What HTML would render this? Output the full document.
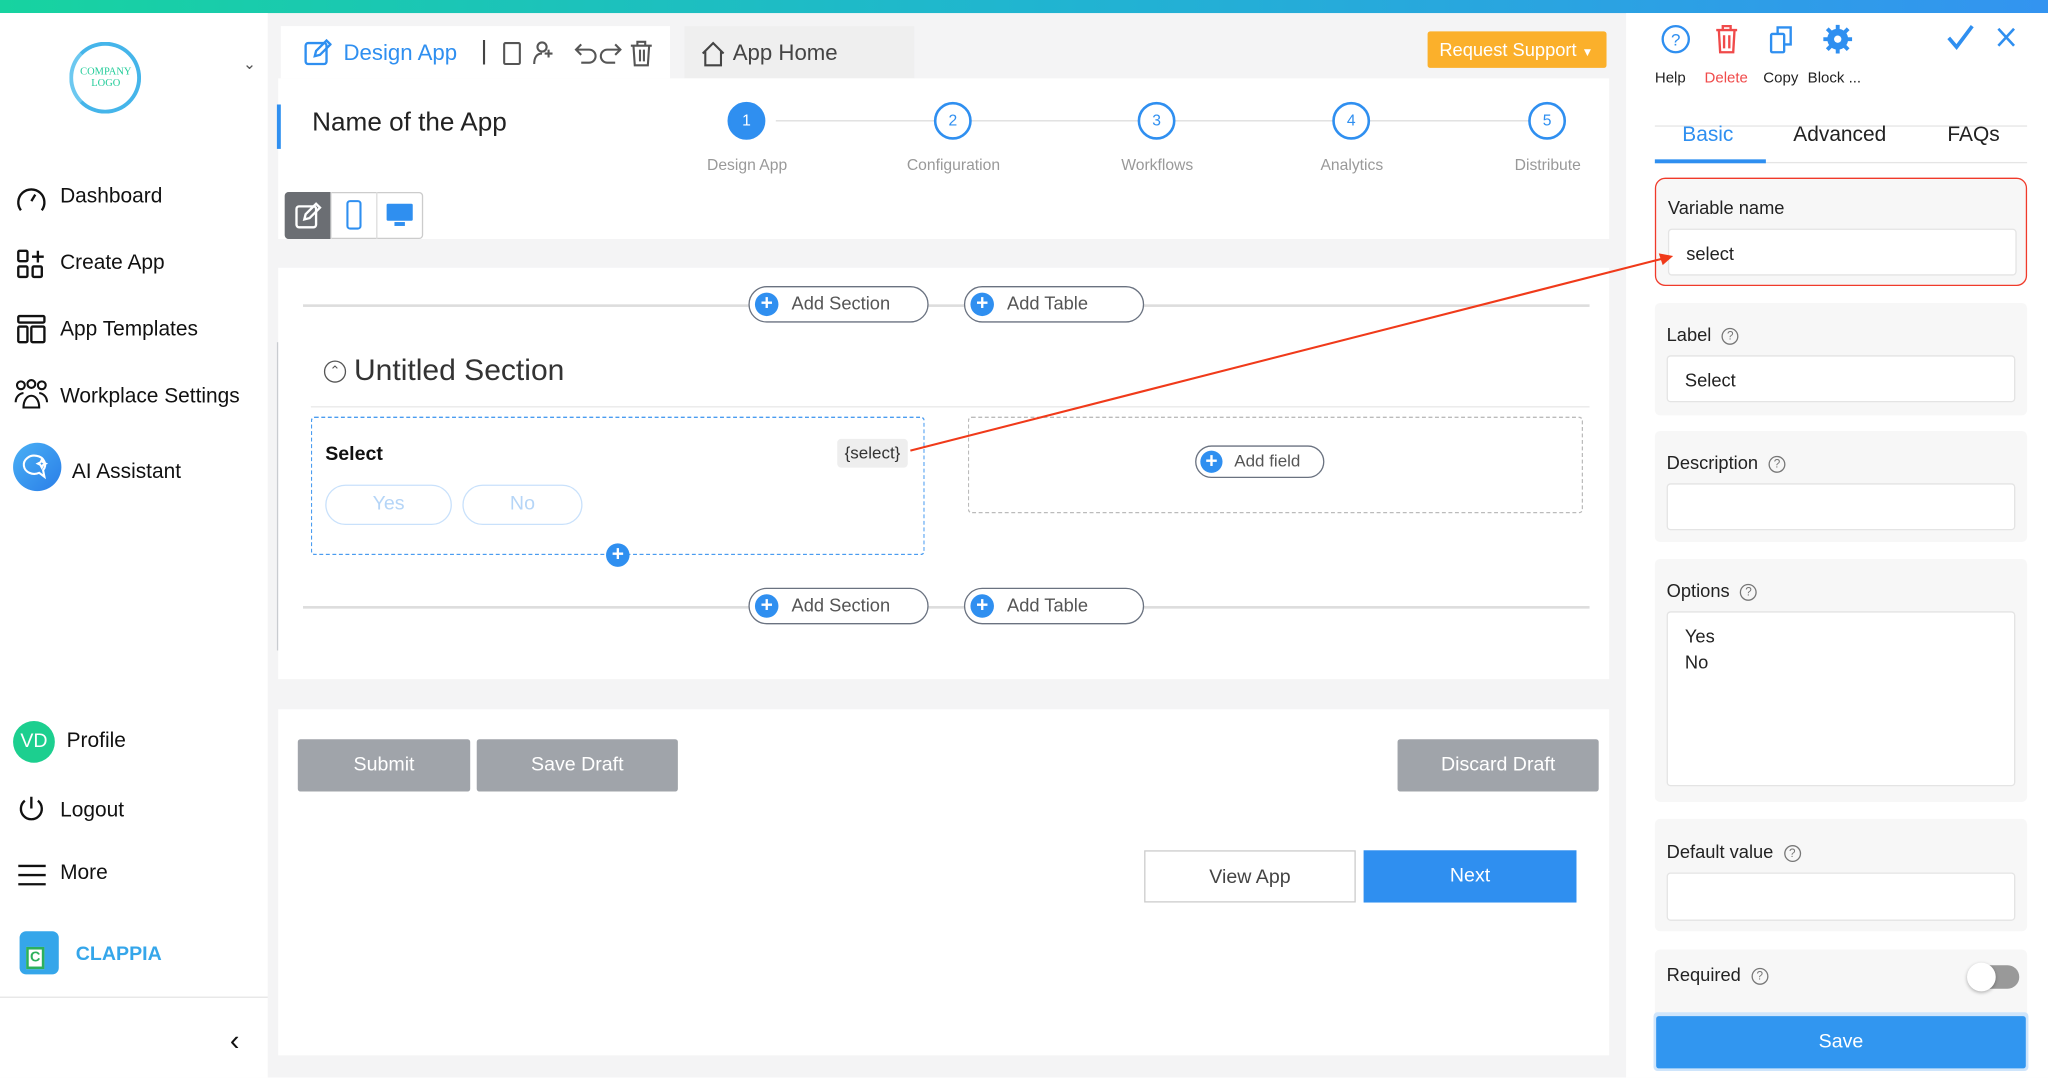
<!DOCTYPE html>
<html><head><meta charset="utf-8"><style>
*{box-sizing:border-box;margin:0;padding:0}
html,body{width:2048px;height:1077px;overflow:hidden;background:#fff;font-family:"Liberation Sans",Arial,sans-serif;color:#222}
#w{position:absolute;left:0;top:0;width:1568px;height:825px;transform:scale(1.30612);transform-origin:0 0;background:#f4f4f5}
.a{position:absolute}
.t{position:absolute;white-space:nowrap}
.nav{font-size:16px;color:#111}
.step{width:29px;height:29px;border-radius:50%;border:2px solid #2f8ff0;color:#2f8ff0;font-size:12px;text-align:center;line-height:25px;background:#fff}
.sl{font-size:12px;color:#999;text-align:center;width:120px}
.pill{border:1.5px solid #6a7280;border-radius:15px;height:28px;background:#fff;font-size:14px;color:#555;line-height:25px}
.plus{position:absolute;left:4px;top:4px;width:18px;height:18px;border-radius:50%;background:#2f8ff0;color:#fff;font-weight:bold;text-align:center;line-height:18px;font-size:16px}
.sec{position:absolute;left:1267px;width:285px;background:#f7f7f7;border-radius:4px}
.lab{position:absolute;left:9px;font-size:14px;color:#222}
.inp{position:absolute;left:9px;width:267px;background:#fff;border:1px solid #e4e4e4;border-radius:3px;font-size:14px;padding-left:13px}
.q{display:inline-block;width:13px;height:13px;border:1.2px solid #777;border-radius:50%;font-size:9px;text-align:center;line-height:11px;color:#777;margin-left:8px;vertical-align:middle}
.gb{position:absolute;background:#a0a4aa;color:#fff;font-size:15px;text-align:center;line-height:40px;border-radius:2px}
</style></head><body><div id="w">
<div class="a" style="left:0;top:0;width:1568px;height:10px;background:linear-gradient(90deg,#17d3a0,#20b5d0 50%,#3394f0)"></div>
<!-- sidebar -->
<div class="a" style="left:0;top:10px;width:205px;height:815px;background:#fff"></div>
<div class="a" style="left:53px;top:32px;width:55px;height:55px;border-radius:50%;border:3px solid #45b5ea;border-left-color:#6cc8f0"></div>
<div class="t" style="left:56px;top:50px;width:50px;text-align:center;font-family:'Liberation Serif';font-size:8px;color:#2c9;line-height:9px">COMPANY<br>LOGO</div>
<div class="t" style="left:186px;top:42px;font-size:12px;color:#555">&#8964;</div>
<svg class="a" style="left:11px;top:140px" width="26" height="24" viewBox="0 0 26 24" fill="none" stroke="#111" stroke-width="1.8"><path d="M5 21A10 10 0 1 1 21 21"/><path d="M13 14l3-5"/></svg>
<div class="t nav" style="left:46px;top:142px">Dashboard</div>
<svg class="a" style="left:12px;top:190px" width="24" height="24" fill="none" stroke="#111" stroke-width="1.8"><rect x="2" y="2" width="7" height="8" rx="1"/><path d="M17 2v9M12.5 6.5h9"/><rect x="2" y="14" width="7" height="8" rx="1"/><rect x="13" y="14" width="7" height="8" rx="1"/></svg>
<div class="t nav" style="left:46px;top:193px">Create App</div>
<svg class="a" style="left:12px;top:240px" width="24" height="24" fill="none" stroke="#111" stroke-width="1.8"><rect x="2" y="2" width="20" height="5" rx="1"/><rect x="2" y="10" width="7" height="12" rx="1"/><rect x="12" y="10" width="10" height="12" rx="1"/></svg>
<div class="t nav" style="left:46px;top:244px">App Templates</div>
<svg class="a" style="left:10px;top:290px" width="28" height="24" fill="none" stroke="#111" stroke-width="1.6"><circle cx="6" cy="5" r="3"/><circle cx="14" cy="4" r="3"/><circle cx="22" cy="5" r="3"/><path d="M2 18c0-5 4-7 6-7M26 18c0-5-4-7-6-7M8 22c0-6 3-9 6-9s6 3 6 9z"/></svg>
<div class="t nav" style="left:46px;top:295px">Workplace Settings</div>
<div class="a" style="left:10px;top:339px;width:37px;height:37px;border-radius:50%;background:linear-gradient(135deg,#4ab0f5,#2a7ee8)"></div>
<svg class="a" style="left:16px;top:346px" width="24" height="22" fill="none" stroke="#fff" stroke-width="1.6"><path d="M12 3a8 7 0 1 0 2 13l4 3-1-5a8 7 0 0 0-5-11z"/><path d="M16 6l1 2 2 1-2 1-1 2-1-2-2-1 2-1z"/></svg>
<div class="t nav" style="left:55px;top:353px">AI Assistant</div>
<div class="a" style="left:10px;top:552px;width:32px;height:32px;border-radius:50%;background:#1ccf8f;color:#fff;font-size:15px;text-align:center;line-height:32px">VD</div>
<div class="t nav" style="left:51px;top:559px">Profile</div>
<svg class="a" style="left:12px;top:608px" width="24" height="24" fill="none" stroke="#111" stroke-width="1.8"><path d="M12 2v9"/><path d="M7 5a8 8 0 1 0 10 0"/></svg>
<div class="t nav" style="left:46px;top:612px">Logout</div>
<svg class="a" style="left:13px;top:661px" width="23" height="18" stroke="#111" stroke-width="1.8"><path d="M1 2h21M1 9h21M1 16h21"/></svg>
<div class="t nav" style="left:46px;top:660px">More</div>
<div class="a" style="left:15px;top:713px;width:30px;height:33px;border-radius:5px;background:#35a6ea"></div>
<div class="a" style="left:20px;top:725px;width:14px;height:17px;background:#fff;border:2px solid #2cb05c;color:#2cb05c;font-size:11px;font-weight:bold;text-align:center;line-height:13px">C</div>
<div class="t" style="left:58px;top:722px;font-size:15px;font-weight:bold;color:#35a6ea">CLAPPIA</div>
<div class="a" style="left:0;top:763px;width:205px;height:1px;background:#e5e5e5"></div>
<div class="t" style="left:176px;top:784px;font-size:22px;color:#111">&#8249;</div>
<div class="a" style="left:212px;top:262px;width:2px;height:236px;background:#c9ccd0"></div>
<!-- header -->
<div class="a" style="left:215px;top:20px;width:298px;height:40px;background:#fff"></div>
<svg class="a" style="left:232px;top:29px" width="22" height="22" fill="none" stroke="#2f8ff0" stroke-width="1.8"><rect x="2" y="4" width="16" height="16" rx="2"/><path d="M9 14l1-4 8-8 3 3-8 8z"/></svg>
<div class="t" style="left:263px;top:31px;font-size:17px;color:#2f8ff0">Design App</div>
<div class="t" style="left:368px;top:28px;font-size:20px;color:#444">|</div>
<svg class="a" style="left:382px;top:30px" width="120" height="22" fill="none" stroke="#555" stroke-width="1.6"><rect x="4" y="3" width="12" height="16" rx="1"/><circle cx="33" cy="6" r="3.5"/><path d="M27 19c0-5 2-8 6-8M38 8v6M35 11h6"/><path d="M60 8h9a5 5 0 0 1 0 10h-6M63 4l-4 4 4 4"/><path d="M92 8h-9a5 5 0 0 0 0 10h6M89 4l4 4-4 4"/><path d="M101 5h16M106 5V2h6v3M103 5l1 15h10l1-15M108 8v9M111 8v9"/></svg>
<div class="a" style="left:524px;top:20px;width:176px;height:40px;background:#efefef"></div>
<svg class="a" style="left:535px;top:30px" width="22" height="22" fill="none" stroke="#444" stroke-width="1.6"><path d="M3 11L11 3l8 8M5 9v11h12V9"/></svg>
<div class="t" style="left:561px;top:31px;font-size:17px;color:#444">App Home</div>
<div class="a" style="left:1093px;top:24px;width:137px;height:28px;background:#fbb02b;border-radius:2px;color:#fff;font-size:14px;line-height:28px;padding-left:9px">Request Support <span style="font-size:9px">&#9660;</span></div>
<!-- name panel -->
<div class="a" style="left:213px;top:60px;width:1019px;height:123px;background:#fff"></div>
<div class="a" style="left:212px;top:80px;width:3px;height:34px;background:#2f8ff0"></div>
<div class="t" style="left:239px;top:83px;font-size:20px;color:#222">Name of the App</div>
<div class="a" style="left:594px;top:92px;width:600px;height:1px;background:#ddd"></div>
<div class="a step" style="left:557px;top:78px;background:#2f8ff0;color:#fff">1</div>
<div class="a step" style="left:715px;top:78px">2</div>
<div class="a step" style="left:871px;top:78px">3</div>
<div class="a step" style="left:1020px;top:78px">4</div>
<div class="a step" style="left:1170px;top:78px">5</div>
<div class="t sl" style="left:512px;top:119px">Design App</div>
<div class="t sl" style="left:670px;top:119px">Configuration</div>
<div class="t sl" style="left:826px;top:119px">Workflows</div>
<div class="t sl" style="left:975px;top:119px">Analytics</div>
<div class="t sl" style="left:1125px;top:119px">Distribute</div>
<div class="a" style="left:218px;top:147px;width:106px;height:36px;border:1px solid #ccc;border-radius:3px;background:#fff"></div>
<div class="a" style="left:218px;top:147px;width:35px;height:36px;background:#6b6e73;border-radius:3px 0 0 3px"></div>
<svg class="a" style="left:225px;top:154px" width="22" height="22" fill="none" stroke="#fff" stroke-width="1.8"><rect x="2" y="4" width="15" height="16" rx="2"/><path d="M8 14l1-4 8-8 3 3-8 8z"/></svg>
<div class="a" style="left:288px;top:147px;width:1px;height:36px;background:#ddd"></div>
<div class="a" style="left:253px;top:147px;width:1px;height:36px;background:#ddd"></div>
<svg class="a" style="left:262px;top:153px" width="18" height="24" fill="none" stroke="#2f8ff0" stroke-width="1.6"><rect x="4" y="1" width="10" height="21" rx="2"/></svg>
<svg class="a" style="left:295px;top:155px" width="22" height="20" fill="#2f8ff0"><rect x="1" y="1" width="20" height="13" rx="1"/><rect x="7" y="15" width="8" height="3"/></svg>
<!-- canvas -->
<div class="a" style="left:213px;top:205px;width:1019px;height:315px;background:#fff"></div>
<div class="a" style="left:232px;top:233px;width:985px;height:2px;background:#ddd"></div>
<div class="a pill" style="left:573px;top:219px;width:138px"><span class="plus">+</span><span style="margin-left:32px">Add Section</span></div>
<div class="a pill" style="left:738px;top:219px;width:138px"><span class="plus">+</span><span style="margin-left:32px">Add Table</span></div>
<div class="a" style="left:248px;top:276px;width:17px;height:17px;border:1.3px solid #555;border-radius:50%;font-size:10px;text-align:center;line-height:16px;color:#555">&#8963;</div>
<div class="t" style="left:271px;top:270px;font-size:23px;color:#333">Untitled Section</div>
<div class="a" style="left:238px;top:311px;width:979px;height:1px;background:#e8e8e8"></div>
<div class="a" style="left:238px;top:319px;width:470px;height:106px;border:1.3px dashed #4a9cf0;border-radius:3px"></div>
<div class="t" style="left:249px;top:339px;font-size:15px;font-weight:bold;color:#111">Select</div>
<div class="a" style="left:641px;top:336px;width:54px;height:22px;background:#eee;border-radius:3px;font-size:13px;color:#333;text-align:center;line-height:22px">{select}</div>
<div class="a" style="left:249px;top:371px;width:97px;height:31px;border:1.5px solid #c9e1fb;border-radius:16px;color:#b5d5f7;font-size:15px;text-align:center;line-height:28px">Yes</div>
<div class="a" style="left:354px;top:371px;width:92px;height:31px;border:1.5px solid #c9e1fb;border-radius:16px;color:#b5d5f7;font-size:15px;text-align:center;line-height:28px">No</div>
<div class="a" style="left:464px;top:416px;width:18px;height:18px;border-radius:50%;background:#2f8ff0;color:#fff;font-weight:bold;text-align:center;line-height:18px;font-size:16px">+</div>
<div class="a" style="left:741px;top:319px;width:471px;height:74px;border:1.3px dashed #bbb;border-radius:3px"></div>
<div class="a pill" style="left:915px;top:341px;width:99px;height:25px;line-height:22px;font-size:13px"><span class="plus" style="top:3px;left:3px;width:17px;height:17px;line-height:17px">+</span><span style="margin-left:29px">Add field</span></div>
<div class="a" style="left:232px;top:464px;width:985px;height:2px;background:#ddd"></div>
<div class="a pill" style="left:573px;top:450px;width:138px"><span class="plus">+</span><span style="margin-left:32px">Add Section</span></div>
<div class="a pill" style="left:738px;top:450px;width:138px"><span class="plus">+</span><span style="margin-left:32px">Add Table</span></div>
<!-- bottom panel -->
<div class="a" style="left:213px;top:543px;width:1019px;height:265px;background:#fff"></div>
<div class="gb" style="left:228px;top:566px;width:132px">Submit</div>
<div class="gb" style="left:365px;top:566px;width:154px">Save Draft</div>
<div class="gb" style="left:1070px;top:566px;width:154px">Discard Draft</div>
<div class="a" style="left:876px;top:651px;width:162px;height:40px;border:1px solid #ccc;font-size:15px;color:#444;text-align:center;line-height:39px;background:#fff">View App</div>
<div class="a" style="left:1044px;top:651px;width:163px;height:40px;background:#2f8ff0;font-size:15px;color:#fff;text-align:center;line-height:40px">Next</div>
<!-- right panel -->
<div class="a" style="left:1245px;top:10px;width:323px;height:815px;background:#fff"></div>
<svg class="a" style="left:1270px;top:17px" width="160" height="26" fill="none" stroke-width="1.8"><circle cx="13" cy="13" r="10" stroke="#2f8ff0"/><text x="13" y="18" font-size="13" fill="#2f8ff0" stroke="none" text-anchor="middle" font-family="Liberation Sans">?</text><g stroke="#f04a4a"><path d="M44 6h16M49 6V3h6v3M46 6l1 17h10l1-17M50 10v10M54 10v10"/></g><g stroke="#2f8ff0"><rect x="86" y="9" width="10" height="14" rx="1"/><path d="M91 9V4h10v13h-5"/></g><g fill="#2f8ff0" stroke="none"><circle cx="137" cy="13" r="8"/></g><circle cx="137" cy="13" r="3" fill="#fff" stroke="none"/><g stroke="#2f8ff0" stroke-width="3"><path d="M137 2v22M126 13h22M129 5l16 16M145 5l-16 16"/></g><circle cx="137" cy="13" r="7" fill="#2f8ff0" stroke="none"/><circle cx="137" cy="13" r="2.8" fill="#fff" stroke="none"/></svg>
<svg class="a" style="left:1490px;top:18px" width="60" height="22" fill="none" stroke="#2f8ff0" stroke-width="2.8"><path d="M2 11l6 7L20 2"/><path d="M40 4l12 13M52 4L40 17" stroke-width="2"/></svg>
<div class="t" style="left:1267px;top:54px;font-size:11.5px;color:#222">Help</div>
<div class="t" style="left:1305px;top:54px;font-size:11.5px;color:#f04a4a">Delete</div>
<div class="t" style="left:1350px;top:54px;font-size:11.5px;color:#222">Copy</div>
<div class="t" style="left:1384px;top:54px;font-size:11.5px;color:#222">Block ...</div>
<div class="a" style="left:1267px;top:96px;width:285px;height:1px;background:#e5e5e5"></div>
<div class="t" style="left:1288px;top:95px;font-size:16px;color:#2f8ff0">Basic</div>
<div class="t" style="left:1373px;top:95px;font-size:16px;color:#222">Advanced</div>
<div class="t" style="left:1491px;top:95px;font-size:16px;color:#222">FAQs</div>
<div class="a" style="left:1267px;top:124px;width:285px;height:1px;background:#e5e5e5"></div>
<div class="a" style="left:1267px;top:122px;width:85px;height:3px;background:#2f8ff0"></div>
<div class="sec" style="top:136px;height:83px;border:1.5px solid #f03a2a;border-radius:8px;background:#f7f7f7"><div class="lab" style="top:14px">Variable name</div><div class="inp" style="top:38px;height:36px;line-height:36px">select</div></div>
<div class="sec" style="top:232px;height:86px"><div class="lab" style="top:16px">Label<span class="q">?</span></div><div class="inp" style="top:40px;height:36px;line-height:36px">Select</div></div>
<div class="sec" style="top:330px;height:85px"><div class="lab" style="top:16px">Description<span class="q">?</span></div><div class="inp" style="top:40px;height:36px"></div></div>
<div class="sec" style="top:428px;height:186px"><div class="lab" style="top:16px">Options<span class="q">?</span></div><div class="inp" style="top:40px;height:134px;padding-top:8px;line-height:20px">Yes<br>No</div></div>
<div class="sec" style="top:627px;height:86px"><div class="lab" style="top:17px">Default value<span class="q">?</span></div><div class="inp" style="top:41px;height:37px"></div></div>
<div class="sec" style="top:727px;height:58px"><div class="lab" style="top:11px">Required<span class="q">?</span></div><div class="a" style="left:241px;top:12px;width:38px;height:18px;border-radius:9px;background:#999"></div><div class="a" style="left:239px;top:10px;width:22px;height:22px;border-radius:50%;background:#fff;box-shadow:0 1px 3px rgba(0,0,0,.3)"></div></div>
<div class="a" style="left:1266px;top:775px;width:287px;height:45px;border-radius:3px;background:#cfe5fb"></div>
<div class="a" style="left:1268px;top:778px;width:283px;height:40px;background:#3196f0;border-radius:2px;color:#fff;font-size:15px;text-align:center;line-height:40px">Save</div>
<!-- arrow -->
<svg class="a" style="left:0;top:0" width="1568" height="825"><path d="M697 345L1273 198" stroke="#f03a1a" stroke-width="1.6"/><path d="M1281 196l-11 -2 3 9z" fill="#f03a1a"/></svg>
</div></body></html>
